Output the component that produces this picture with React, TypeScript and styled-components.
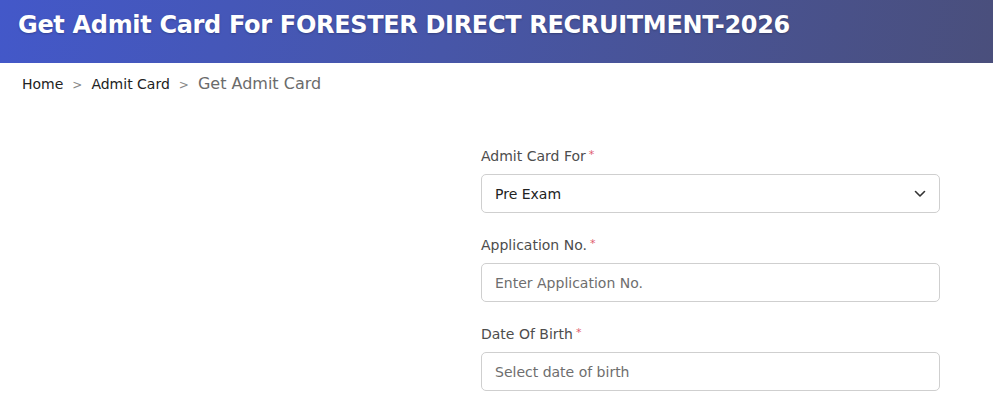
import React from 'react';
import styled, { createGlobalStyle } from 'styled-components';

const GlobalStyle = createGlobalStyle`
  body {
    margin: 0;
    background: #ffffff;
    font-family: 'DejaVu Sans', 'Open Sans', sans-serif;
  }
`;

const Banner = styled.header`
  height: 63px;
  padding: 0 18px;
  display: flex;
  align-items: center;
  background: linear-gradient(100deg, #4358c9 0%, #4756a8 45%, #4a4f7c 100%);
`;

const PageTitle = styled.h1`
  margin: 0 0 13px;
  color: #ffffff;
  font-size: 24px;
  font-weight: 700;
  letter-spacing: -0.32px;
  text-shadow: 0 1px 2px rgba(0, 0, 0, 0.25);
`;

const Crumbs = styled.nav`
  display: flex;
  align-items: baseline;
  gap: 9px;
  padding: 11px 22px 0;
  color: #222;
`;

const Crumb = styled.span<{ $current?: boolean }>`
  color: ${(p) => (p.$current ? '#6b6b6b' : '#222')};
  font-size: ${(p) => (p.$current ? '16px' : '14px')};
`;

const Sep = styled.span`
  color: #888;
  font-size: 12px;
`;

const Body = styled.main`
  display: grid;
  grid-template-columns: 459px 459px;
  padding: 55px 53px 0 22px;
`;

const Form = styled.form`
  grid-column: 2;
  display: flex;
  flex-direction: column;
`;

const Field = styled.div`
  display: flex;
  flex-direction: column;
  gap: 10px;
  margin-bottom: 24px;
`;

const Label = styled.label`
  font-size: 14px;
  color: #4d4d4d;
`;

const Star = styled.span`
  color: #e05a6d;
  font-size: 11px;
  margin-left: 3px;
  vertical-align: top;
`;

const Box = styled.div<{ $placeholder?: boolean }>`
  height: 39px;
  box-sizing: border-box;
  border: 1px solid #cfcfcf;
  border-radius: 5px;
  padding: 0 13px;
  display: flex;
  align-items: center;
  justify-content: space-between;
  font-size: 14px;
  color: ${(p) => (p.$placeholder ? '#6e6e6e' : '#222')};
`;

const Chevron = () => (
  <svg width="12" height="8" viewBox="0 0 12 8" fill="none">
    <path d="M1.5 1.5 6 6l4.5-4.5" stroke="#333" strokeWidth="1.6" strokeLinecap="round" strokeLinejoin="round" />
  </svg>
);

export default function App() {
  return (
    <>
      <GlobalStyle />
      <Banner>
        <PageTitle>Get Admit Card For FORESTER DIRECT RECRUITMENT-2026</PageTitle>
      </Banner>
      <Crumbs>
        <Crumb>Home</Crumb>
        <Sep>&gt;</Sep>
        <Crumb>Admit Card</Crumb>
        <Sep>&gt;</Sep>
        <Crumb $current>Get Admit Card</Crumb>
      </Crumbs>
      <Body>
        <Form>
          <Field>
            <Label>
              Admit Card For<Star>*</Star>
            </Label>
            <Box>
              Pre Exam
              <Chevron />
            </Box>
          </Field>
          <Field>
            <Label>
              Application No.<Star>*</Star>
            </Label>
            <Box $placeholder>Enter Application No.</Box>
          </Field>
          <Field>
            <Label>
              Date Of Birth<Star>*</Star>
            </Label>
            <Box $placeholder>Select date of birth</Box>
          </Field>
        </Form>
      </Body>
    </>
  );
}
